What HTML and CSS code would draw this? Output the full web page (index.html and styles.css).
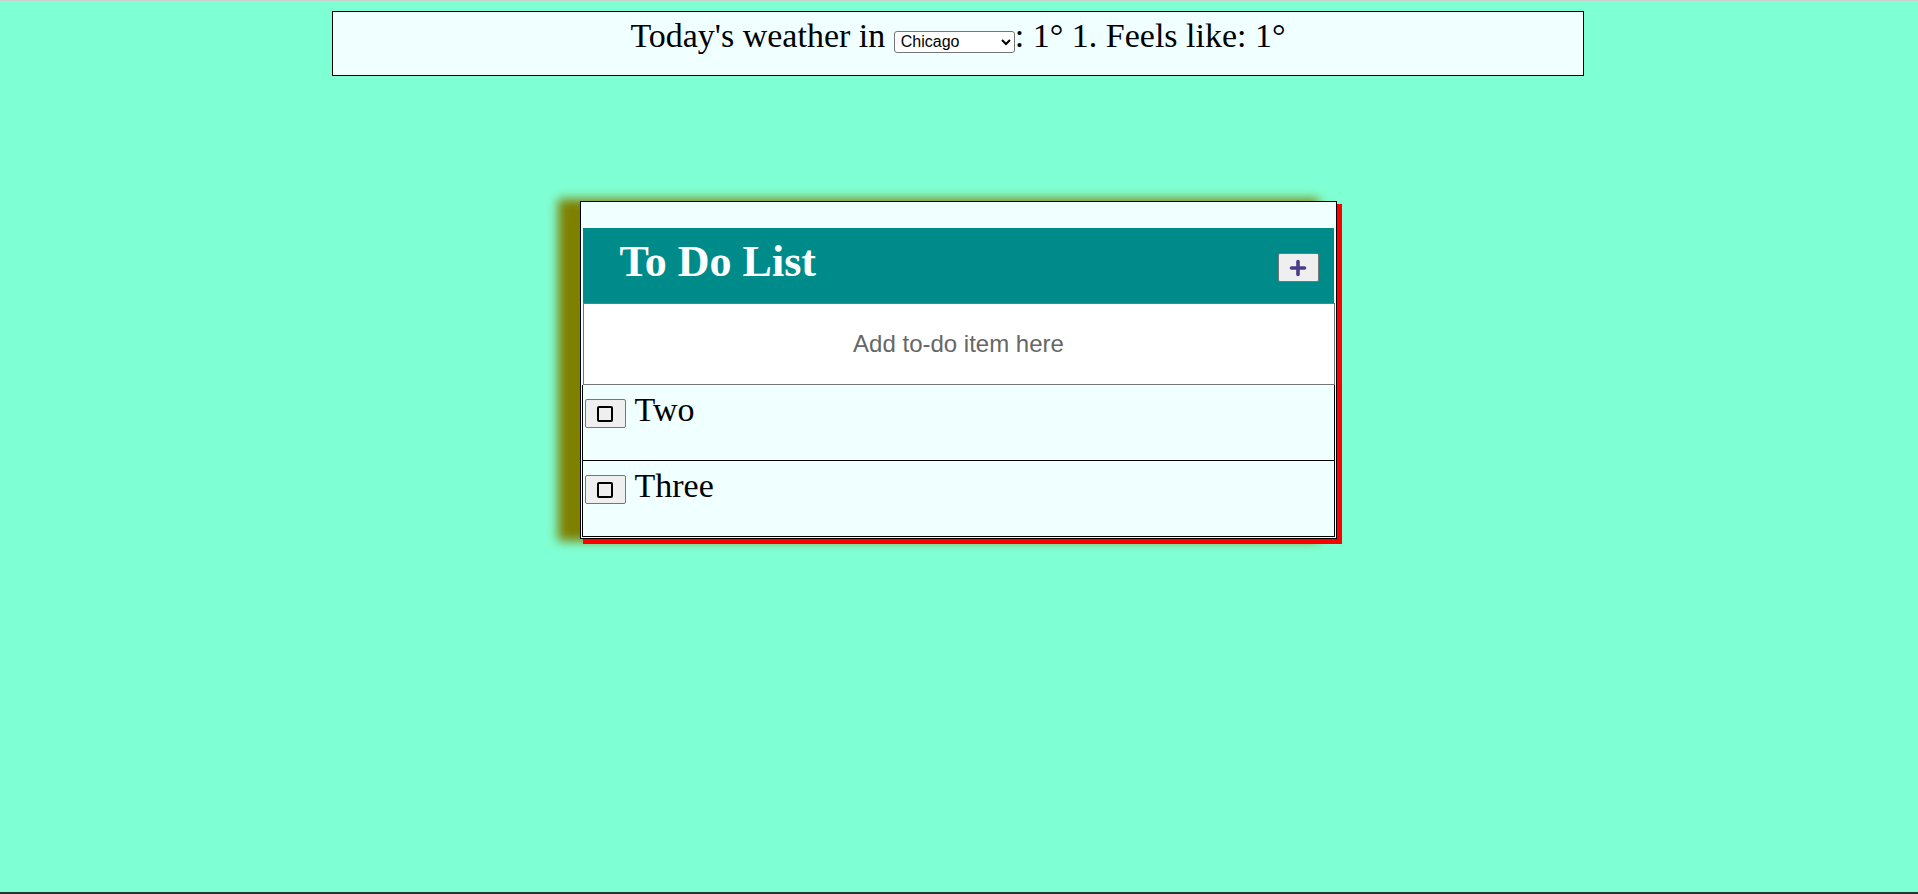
FILE: index.html
```html
<!DOCTYPE html>
<html lang="en">
<head>
<meta charset="utf-8">
<title>To Do List</title>
<link rel="stylesheet" href="styles.css">
</head>
<body>
<div class="page">
  <div class="weather">
    <h2 class="weather-text">Today's weather in <select class="city"><option>Chicago</option><option>New York City</option><option>Los Angeles</option></select>: 1° 1. Feels like: 1°</h2>
  </div>
  <div class="card">
    <div class="card-header">
      <h1 class="title">To Do List</h1>
      <button class="add-btn" type="button" aria-label="Add">
        <svg width="18" height="18" viewBox="0 0 18 18"><path d="M2.5 9H15.5M9 2.5V15.5" stroke="#483d8b" stroke-width="3.6" stroke-linecap="round" fill="none"/></svg>
      </button>
    </div>
    <input class="new-item" type="text" placeholder="Add to-do item here">
    <ul class="items">
      <li class="item"><button class="check" type="button"><span class="box"></span></button><span class="item-text">Two</span></li>
      <li class="item"><button class="check" type="button"><span class="box"></span></button><span class="item-text">Three</span></li>
    </ul>
  </div>
</div>
</body>
</html>
```
FILE: styles.css
```css
html, body {
  margin: 0;
  padding: 0;
  background: #7fffd4;
}

.page {
  min-height: 100vh;
  box-sizing: border-box;
  border-top: 1px solid #c9cfcc;
  border-bottom: 2px solid #27322f;
  background: #7fffd4;
  padding: 10px 2px 0 0;
  font-family: "Liberation Serif", "Times New Roman", serif;
  color: #000;
}

.weather {
  width: 1250px;
  margin: 0 auto;
  border: 1px solid #000;
  background: #f0ffff;
  padding: 5px 0 20px;
}

.weather-text {
  margin: 0;
  font-size: 34px;
  font-weight: normal;
  line-height: 38px;
  text-align: center;
}

.city {
  width: 121px;
  height: 22px;
  font: 16px "Liberation Sans", Arial, sans-serif;
  color: #000;
  vertical-align: baseline;
  border: 1px solid #767676;
  border-radius: 3px;
  background: #fff;
  padding: 0 0 0 2px;
  margin: 0;
}

.card {
  width: 753px;
  margin: 125px auto 0;
  border: 1px solid #000;
  background: #f0ffff;
  padding: 26px 1px 1px;
  box-shadow: 4px 4px 0 1px #ff0000, -20px 0 10px 2px #808000;
}

.card-header {
  display: flex;
  justify-content: space-between;
  align-items: flex-start;
  height: 75px;
  margin: 0 1px;
  background: #008b8b;
}

.title {
  margin: 8px 0 0 37px;
  font-size: 44px;
  font-weight: bold;
  color: #fff;
  line-height: normal;
}

.add-btn {
  margin: 25px 15px 0 0;
  width: 41px;
  height: 29px;
  padding: 0;
  background: #efefef;
  border: 1px solid #767676;
  border-radius: 2px;
  display: flex;
  align-items: center;
  justify-content: center;
}

.add-btn svg {
  display: block;
}

.new-item {
  display: block;
  box-sizing: border-box;
  width: 752px;
  height: 82px;
  margin: 0 0 0 1px;
  padding: 0;
  border: 1px solid #767676;
  background: #fff;
  text-align: center;
  font: 24px "Liberation Sans", Arial, sans-serif;
}

.new-item::placeholder {
  color: #666;
  opacity: 1;
}

.items {
  list-style: none;
  margin: 0;
  padding: 0;
}

.item {
  display: flex;
  align-items: flex-start;
  height: 75px;
  border: 1px solid #000;
  border-top: none;
}

.check {
  margin: 14px 0 0 2px;
  width: 41px;
  height: 29px;
  padding: 0;
  background: #efefef;
  border: 1px solid #767676;
  border-radius: 2px;
  display: flex;
  align-items: center;
  justify-content: center;
}

.box {
  display: block;
  width: 12px;
  height: 12px;
  border: 2px solid #000;
  border-radius: 2px;
  margin-top: 1px;
}

.item-text {
  margin: 5px 0 0 9px;
  font-size: 34px;
  line-height: 39px;
}
```
